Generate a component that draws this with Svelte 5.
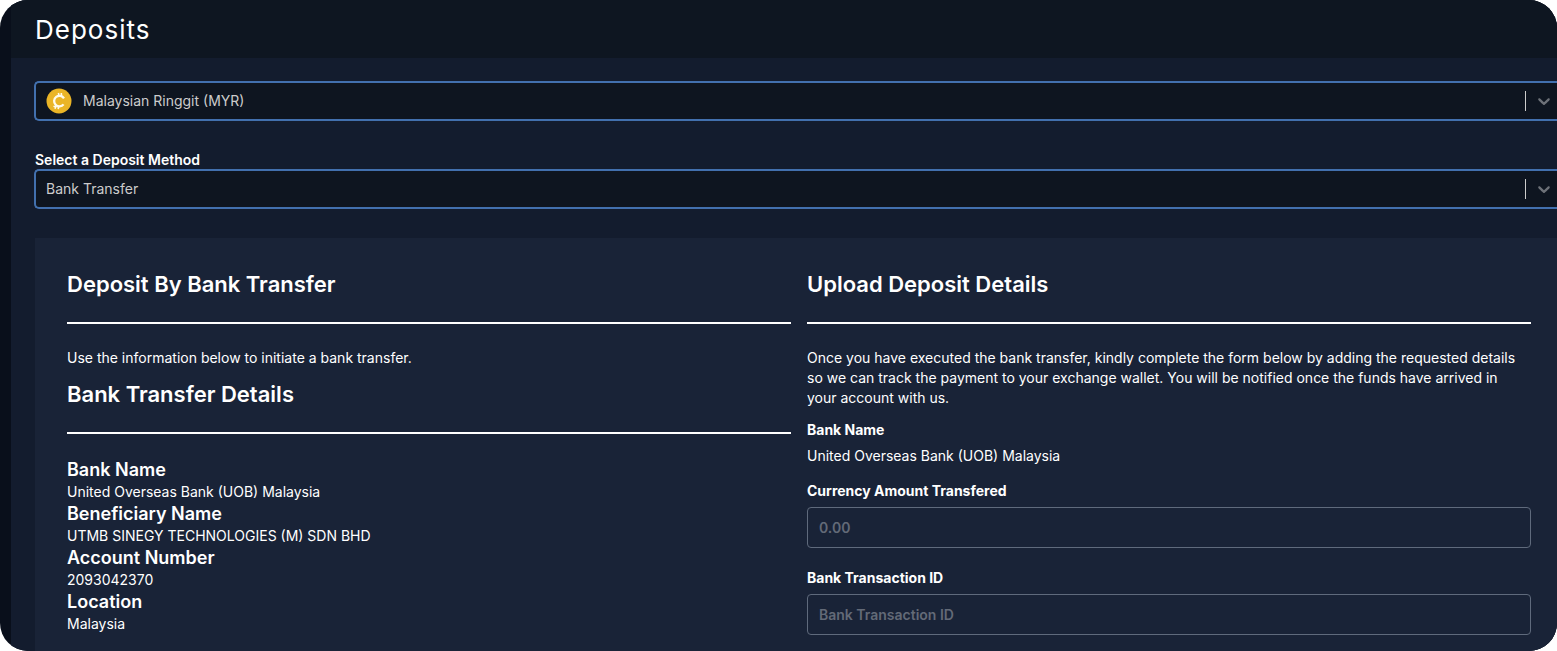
<script lang="ts">
  const currencies = [{ code: 'MYR', name: 'Malaysian Ringgit' }];
  const methods = ['Bank Transfer'];

  const details = [
    { label: 'Bank Name', value: 'United Overseas Bank (UOB) Malaysia' },
    { label: 'Beneficiary Name', value: 'UTMB SINEGY TECHNOLOGIES (M) SDN BHD' },
    { label: 'Account Number', value: '2093042370' },
    { label: 'Location', value: 'Malaysia' },
  ];

  let currency = $state('MYR');
  let method = $state('Bank Transfer');
  let amount = $state('');
  let transactionId = $state('');
</script>

{#snippet indicator()}
  <span class="indicator" aria-hidden="true">
    <svg viewBox="0 0 20 20" width="20" height="20">
      <path
        d="M4.516 7.548c0.436-0.446 1.043-0.481 1.576 0l3.908 3.747 3.908-3.747c0.533-0.481 1.141-0.446 1.574 0 0.436 0.445 0.408 1.197 0 1.615-0.406 0.418-4.695 4.502-4.695 4.502-0.217 0.223-0.502 0.335-0.787 0.335s-0.57-0.112-0.789-0.335c0 0-4.287-4.084-4.695-4.502s-0.436-1.17 0-1.615z"
      />
    </svg>
  </span>
{/snippet}

<div class="shell">
  <main>
    <header>
      <h1>Deposits</h1>
    </header>

    <div class="content">
      <div class="select currency">
        <svg class="coin" viewBox="0 0 26 26" width="26" height="26" aria-hidden="true">
          <circle cx="13" cy="13" r="12.5" fill="#eab526" />
          <g fill="none" stroke="#fffbea">
            <path d="M18 10.4A5.3 5.3 0 1 0 17.6 16.4" stroke-width="2.3" />
            <path d="M12.4 5l.6 3M15.3 5l.3 3.6M10 17.4l-1 3.4M12.8 18l-.6 3.2" stroke-width="1.6" />
            <path d="M10.4 18.8l-3-.4" stroke-width="1.4" />
          </g>
        </svg>
        <select bind:value={currency} aria-label="Currency">
          {#each currencies as c}
            <option value={c.code}>{c.name} ({c.code})</option>
          {/each}
        </select>
        {@render indicator()}
      </div>

      <label class="method-label" for="method">Select a Deposit Method</label>
      <div class="select">
        <select id="method" bind:value={method}>
          {#each methods as m}
            <option value={m}>{m}</option>
          {/each}
        </select>
        {@render indicator()}
      </div>

      <div class="card">
        <section>
          <h2>Deposit By Bank Transfer</h2>
          <hr />
          <p>Use the information below to initiate a bank transfer.</p>
          <h2>Bank Transfer Details</h2>
          <hr />
          <dl>
            {#each details as d}
              <dt>{d.label}</dt>
              <dd>{d.value}</dd>
            {/each}
          </dl>
        </section>

        <section>
          <h2>Upload Deposit Details</h2>
          <hr />
          <p>
            Once you have executed the bank transfer, kindly complete the form below by adding the
            requested details so we can track the payment to your exchange wallet. You will be
            notified once the funds have arrived in your account with us.
          </p>
          <form>
            <div class="label">Bank Name</div>
            <div class="value">United Overseas Bank (UOB) Malaysia</div>
            <label class="label" for="amount">Currency Amount Transfered</label>
            <input id="amount" type="text" inputmode="decimal" placeholder="0.00" bind:value={amount} />
            <label class="label" for="transaction">Bank Transaction ID</label>
            <input id="transaction" type="text" placeholder="Bank Transaction ID" bind:value={transactionId} />
          </form>
        </section>
      </div>
    </div>
  </main>
</div>

<style>
  :global(body) {
    background: #fff;
  }

  .shell {
    display: flex;
    box-sizing: border-box;
    min-height: 100vh;
    padding-left: 11px;
    border-radius: 28px;
    overflow: hidden;
    background: #090f1b;
    color: #fff;
    font-family: Inter, 'Liberation Sans', sans-serif;
    font-size: 14px;
    line-height: 20px;
  }

  main {
    display: flex;
    flex-direction: column;
    flex: 1;
    min-width: 0;
    background: #131c2e;
  }

  header {
    padding: 12px 24px 10px;
    background: #0e1621;
  }

  h1 {
    margin: 0;
    font-size: 26px;
    font-weight: 400;
    line-height: 36px;
    letter-spacing: 1px;
  }

  .content {
    display: flex;
    flex-direction: column;
    flex: 1;
    padding: 23px 0 0 24px;
  }

  .select {
    position: relative;
    margin-left: -1px;
  }

  select {
    display: block;
    box-sizing: border-box;
    width: 100%;
    height: 40px;
    padding: 0 44px 0 10px;
    appearance: none;
    border: 2px solid #4270ae;
    border-right: 0;
    border-radius: 5px 0 0 5px;
    outline: none;
    background: #0e1520;
    color: #ccc;
    font: inherit;
  }

  .currency select {
    padding-left: 47px;
  }

  .coin {
    position: absolute;
    top: 7px;
    left: 12px;
  }

  .indicator {
    position: absolute;
    top: 10px;
    right: 3px;
    display: flex;
    padding-left: 8px;
    border-left: 1px solid #ccc;
    pointer-events: none;
  }

  .indicator svg {
    fill: #6d7178;
  }

  .method-label {
    margin-top: 30px;
    font-weight: 600;
    line-height: 18px;
  }

  .card {
    display: grid;
    grid-template-columns: 1fr 1fr;
    gap: 16px;
    flex: 1;
    margin-top: 29px;
    padding: 32px 26px 16px 32px;
    background: #192337;
  }

  h2 {
    margin: 0;
    font-size: 22px;
    font-weight: 600;
    line-height: 28px;
  }

  hr {
    height: 2px;
    margin: 24px 0;
    border: 0;
    background: #fff;
  }

  p {
    margin: 0 0 12px;
  }

  dl,
  dd {
    margin: 0;
  }

  dt {
    font-size: 18px;
    font-weight: 600;
    line-height: 24px;
  }

  .label {
    display: block;
    margin-bottom: 6px;
    font-weight: 700;
  }

  .value {
    margin-bottom: 15px;
  }

  input {
    display: block;
    box-sizing: border-box;
    width: 100%;
    height: 41px;
    margin-bottom: 20px;
    padding: 0 11px;
    border: 1px solid #5f6a7c;
    border-radius: 4px;
    outline: none;
    background: transparent;
    color: #fff;
    font: inherit;
    font-weight: 600;
  }

  input:last-child {
    margin-bottom: 0;
  }

  input::placeholder {
    color: #636a77;
    opacity: 1;
  }
</style>
